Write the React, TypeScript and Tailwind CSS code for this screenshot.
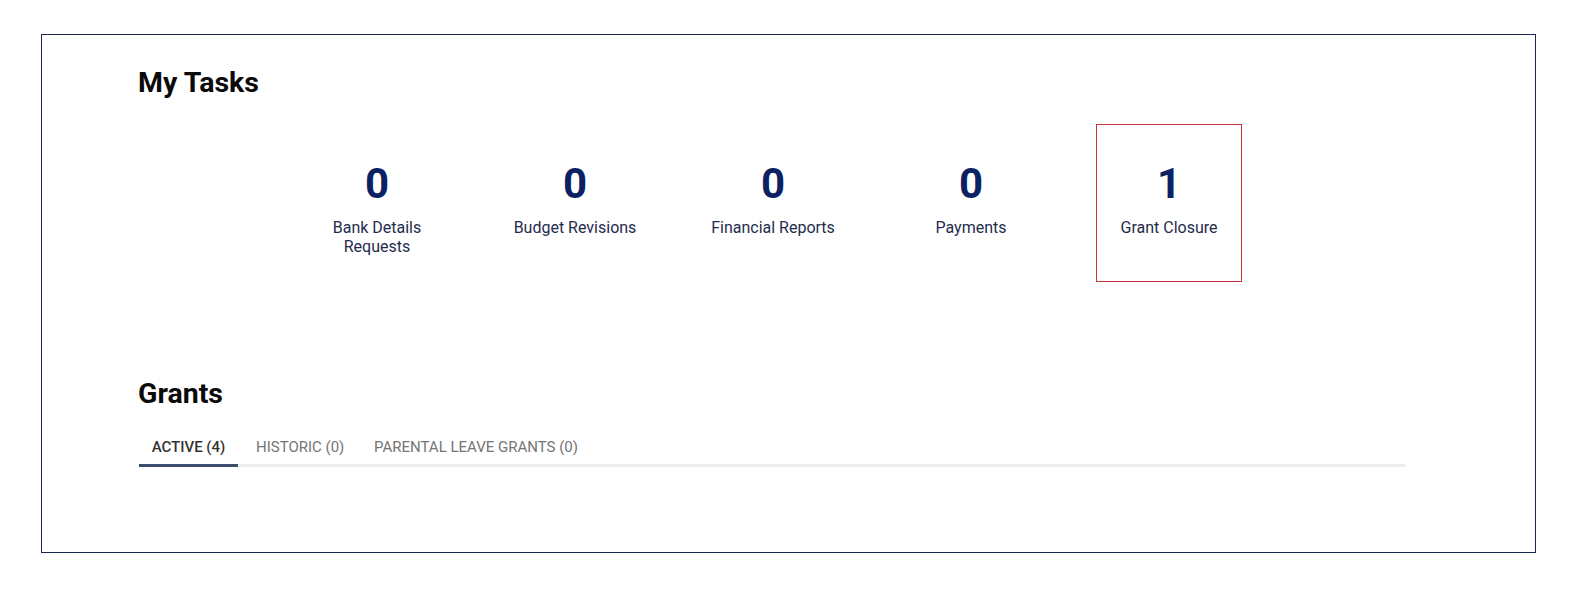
import React from "react";

const tasks = [
  { n: "0", label: "Bank Details Requests", active: false },
  { n: "0", label: "Budget Revisions", active: false },
  { n: "0", label: "Financial Reports", active: false },
  { n: "0", label: "Payments", active: false },
  { n: "1", label: "Grant Closure", active: true },
];

export default function App() {
  return (
    <div
      className="w-[1580px] h-[591px] bg-white pt-[34px] pl-[41px] pr-[44px]"
      style={{ fontFamily: "Roboto, 'Liberation Sans', sans-serif" }}
    >
      <div className="h-[519px] border border-[#1b2a4a] pt-[32px] pl-[96px] pr-[129px]">
        <h2 className="text-[28.5px] leading-[32px] font-bold text-[#0a0a0a]">My Tasks</h2>
        <div className="mt-[25px] flex justify-center gap-[52px] pl-[2px]">
          {tasks.map((t) => (
            <div
              key={t.label}
              className={`w-[146px] h-[158px] flex flex-col items-center pt-[35px] border ${
                t.active ? "border-[#c8323a]" : "border-transparent"
              }`}
            >
              <div className="text-[42px] leading-[48px] font-bold text-[#0c2163]">{t.n}</div>
              <div className="mt-[10px] text-[16px] leading-[19px] text-[#1f2c4c] text-center">
                {t.label}
              </div>
            </div>
          ))}
        </div>
        <h2 className="mt-[96px] text-[28.5px] leading-[32px] font-bold text-[#0a0a0a]">Grants</h2>
        <div className="mt-[13px] ml-[1px] relative flex">
          <div className="absolute left-0 right-0 bottom-0 h-[3px] bg-[#eeeeee]" />
          <div className="relative w-[99px] pt-[14px] pb-[10px] flex justify-center text-[15px] leading-[20px] font-medium text-[#333333]">
            ACTIVE (4)
            <div className="absolute left-0 right-0 bottom-0 h-[3px] bg-[#3e4c6e]" />
          </div>
          <div className="relative w-[118px] pl-[18px] pt-[14px] pb-[10px] text-[15px] leading-[20px] text-[#757575]">
            HISTORIC (0)
          </div>
          <div className="relative pl-[18px] pt-[14px] pb-[10px] text-[15px] leading-[20px] text-[#757575]">
            PARENTAL LEAVE GRANTS (0)
          </div>
        </div>
      </div>
    </div>
  );
}
